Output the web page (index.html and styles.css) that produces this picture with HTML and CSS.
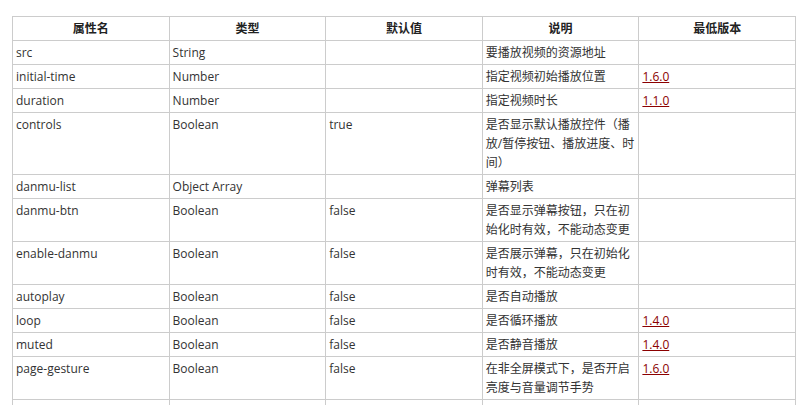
FILE: index.html
```html
<!DOCTYPE html>
<html lang="zh-CN">
<head>
<meta charset="utf-8">
<title>video 属性</title>
<link rel="stylesheet" href="styles.css">
</head>
<body>
<div class="page">
<table class="props">
<thead>
<tr><th>属性名</th><th>类型</th><th>默认值</th><th>说明</th><th>最低版本</th></tr>
</thead>
<tbody>
<tr><td>src</td><td>String</td><td></td><td>要播放视频的资源地址</td><td></td></tr>
<tr><td>initial-time</td><td>Number</td><td></td><td>指定视频初始播放位置</td><td><a href="#">1.6.0</a></td></tr>
<tr><td>duration</td><td>Number</td><td></td><td>指定视频时长</td><td><a href="#">1.1.0</a></td></tr>
<tr><td>controls</td><td>Boolean</td><td>true</td><td>是否显示默认播放控件（播放/暂停按钮、播放进度、时间）</td><td></td></tr>
<tr><td>danmu-list</td><td>Object Array</td><td></td><td>弹幕列表</td><td></td></tr>
<tr><td>danmu-btn</td><td>Boolean</td><td>false</td><td>是否显示弹幕按钮，只在初始化时有效，不能动态变更</td><td></td></tr>
<tr><td>enable-danmu</td><td>Boolean</td><td>false</td><td>是否展示弹幕，只在初始化时有效，不能动态变更</td><td></td></tr>
<tr><td>autoplay</td><td>Boolean</td><td>false</td><td>是否自动播放</td><td></td></tr>
<tr><td>loop</td><td>Boolean</td><td>false</td><td>是否循环播放</td><td><a href="#">1.4.0</a></td></tr>
<tr><td>muted</td><td>Boolean</td><td>false</td><td>是否静音播放</td><td><a href="#">1.4.0</a></td></tr>
<tr><td>page-gesture</td><td>Boolean</td><td>false</td><td>在非全屏模式下，是否开启亮度与音量调节手势</td><td><a href="#">1.6.0</a></td></tr>
<tr class="next"><td></td><td></td><td></td><td></td><td></td></tr>
</tbody>
</table>
</div>
</body>
</html>
```
FILE: styles.css
```css
html, body {
  margin: 0;
  padding: 0;
  background: #fff;
}
.page {
  padding: 16px 8px 0 12px;
  font-family: "Open Sans", "Noto Sans CJK SC", sans-serif;
  font-size: 12px;
  color: #333;
}
.props {
  width: 784px;
  border-collapse: collapse;
  table-layout: fixed;
}
.props th,
.props td {
  border: 1px solid #ccc;
  padding: 2px 3px;
  line-height: 19px;
  vertical-align: top;
  text-align: left;
  word-break: break-all;
}
.props th {
  text-align: center;
  font-weight: bold;
  color: #222;
}
.props .next td {
  height: 19px;
}
.props a {
  color: #8b0000;
  text-decoration: underline;
}
```
